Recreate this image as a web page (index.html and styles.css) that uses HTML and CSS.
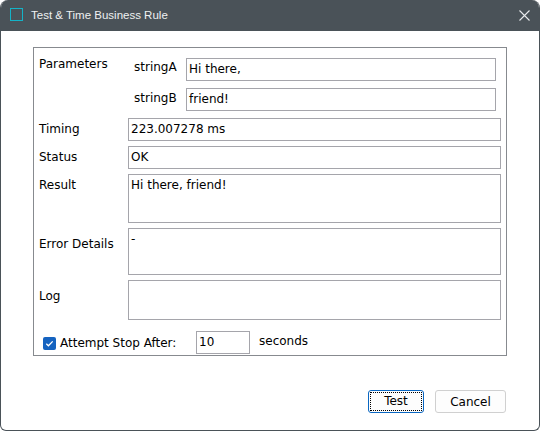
FILE: index.html
```html
<!DOCTYPE html>
<html>
<head>
<meta charset="utf-8">
<link rel="stylesheet" href="styles.css">
</head>
<body>
<div class="window">
  <div class="titlebar">
    <span class="app-icon"></span>
    <span class="title">Test &amp; Time Business Rule</span>
    <svg class="close" width="11" height="11" viewBox="0 0 11 11"><path d="M0.5 0.5 L10.5 10.5 M10.5 0.5 L0.5 10.5" stroke="#e8eaec" stroke-width="1.1" fill="none"/></svg>
  </div>
  <div class="content">
    <div class="group">
      <div class="row">
        <div class="lbl lbl-params">Parameters</div>
        <div class="params">
          <div class="prow">
            <div class="plbl plbl-a">stringA</div>
            <div class="field pfield">Hi there,</div>
          </div>
          <div class="prow prow-b">
            <div class="plbl plbl-b">stringB</div>
            <div class="field pfield">friend!</div>
          </div>
        </div>
      </div>
      <div class="row gap7">
        <div class="lbl lbl-std">Timing</div>
        <div class="field wide">223.007278 ms</div>
      </div>
      <div class="row gap5">
        <div class="lbl lbl-std">Status</div>
        <div class="field wide">OK</div>
      </div>
      <div class="row gap5">
        <div class="lbl lbl-std">Result</div>
        <div class="field wide result">Hi there, friend!</div>
      </div>
      <div class="row gap5">
        <div class="lbl lbl-low">Error Details</div>
        <div class="field wide error">-</div>
      </div>
      <div class="row gap5">
        <div class="lbl lbl-low">Log</div>
        <div class="field wide log"></div>
      </div>
      <div class="attempt">
        <span class="check"><svg width="13" height="13" viewBox="0 0 13 13"><path d="M3.3 6.8 L5.4 8.8 L9.7 4.4" stroke="#fff" stroke-width="1.3" fill="none"/></svg></span>
        <span class="attempt-lbl">Attempt Stop After:</span>
        <div class="field secs">10</div>
        <span class="seconds">seconds</span>
      </div>
    </div>
    <div class="buttons">
      <div class="btn btn-default"><span class="focus">Test</span></div>
      <div class="btn">Cancel</div>
    </div>
  </div>
</div>
</body>
</html>
```
FILE: styles.css
```css
html, body {
  margin: 0;
  padding: 0;
  background: #ffffff;
}
.window {
  width: 540px;
  height: 431px;
  box-sizing: border-box;
  border: 1px solid #4a5258;
  border-top: 0;
  border-radius: 8px 8px 6px 6px;
  overflow: hidden;
  background: #ffffff;
  font-family: "DejaVu Sans", Verdana, sans-serif;
  font-size: 12px;
  line-height: 15px;
  color: #000;
}
.titlebar {
  height: 31px;
  background: #4a5258;
  display: flex;
  align-items: flex-start;
  position: relative;
}
.app-icon {
  width: 11px;
  height: 11px;
  border: 1.5px solid #14b3c7;
  margin: 8px 0 0 9px;
}
.title {
  font-family: "Liberation Sans", Arial, sans-serif;
  font-size: 11.5px;
  line-height: 14px;
  color: #eef0f1;
  margin: 8px 0 0 8px;
}
.close {
  position: absolute;
  left: 518px;
  top: 10px;
}
.content {
  display: flex;
  flex-direction: column;
}
.group {
  margin: 16px 0 0 32px;
  width: 474px;
  box-sizing: border-box;
  border: 1px solid #878a8f;
  padding: 10px 5px 1px 5px;
}
.row {
  display: flex;
}
.gap7 { margin-top: 7px; }
.gap5 { margin-top: 5px; }
.lbl {
  width: 89px;
  flex: none;
}
.lbl-params { margin-top: -1px; }
.lbl-std { padding-top: 4px; }
.lbl-low { padding-top: 9px; }
.params {
  padding-left: 6px;
}
.prow {
  display: flex;
}
.prow-b { margin-top: 7px; }
.plbl {
  width: 52px;
  flex: none;
}
.plbl-a { padding-top: 2px; }
.plbl-b { padding-top: 3px; }
.field {
  box-sizing: border-box;
  border: 1px solid #a5a5ab;
  height: 23px;
  padding: 3px 2px 0 2px;
  background: #fff;
  white-space: nowrap;
}
.pfield { width: 310px; }
.wide { width: 373px; }
.result { height: 49px; }
.error { height: 47px; }
.log { height: 40px; }
.attempt {
  display: flex;
  align-items: flex-start;
  margin-top: 11px;
  padding-left: 4px;
}
.check {
  width: 13px;
  height: 13px;
  border-radius: 2px;
  background: #1563c0;
  margin-top: 6px;
  display: flex;
}
.attempt-lbl {
  width: 136px;
  margin-left: 4px;
  padding-top: 5px;
}
.secs {
  width: 54px;
}
.seconds {
  margin-left: 9px;
  padding-top: 3px;
}
.buttons {
  display: flex;
  justify-content: flex-end;
  gap: 11px;
  margin-top: 34px;
  padding-right: 33px;
}
.btn {
  box-sizing: border-box;
  height: 23px;
  width: 71px;
  border: 1px solid #d0d0d0;
  border-radius: 3px;
  background: #fdfdfd;
  display: flex;
  align-items: center;
  justify-content: center;
  padding-top: 1px;
}
.btn-default {
  width: 56px;
  border-color: #0a67c2;
  padding: 1px;
}
.focus {
  flex: 1;
  align-self: stretch;
  border: 1px dotted #000;
  display: flex;
  align-items: center;
  justify-content: center;
}
```
